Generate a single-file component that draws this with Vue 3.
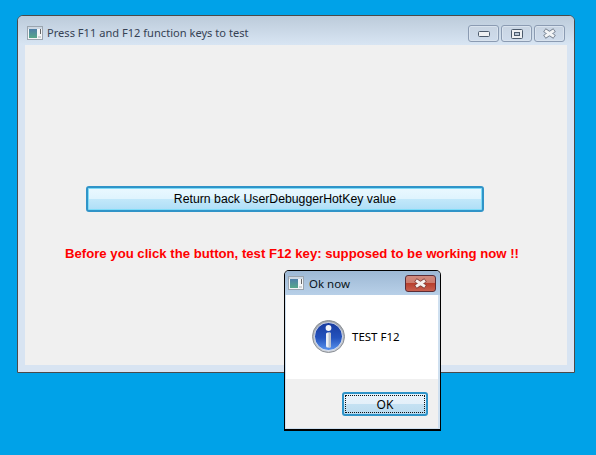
<template>
  <div class="desktop">
    <section class="window main">
      <header class="titlebar">
        <svg class="appicon" width="16" height="14" viewBox="0 0 16 14">
          <defs>
            <linearGradient id="scr" x1="0" y1="0" x2="0" y2="1">
              <stop offset="0" stop-color="#4f7fa8" />
              <stop offset="1" stop-color="#57a88a" />
            </linearGradient>
          </defs>
          <rect x="0.5" y="0.5" width="15" height="13" fill="#f4f6f8" stroke="#9aa4ae" />
          <rect x="1" y="1" width="14" height="2" fill="#cdd8e3" />
          <rect x="2" y="3" width="8" height="9" fill="url(#scr)" />
          <rect x="11" y="10" width="3" height="2" fill="#cfd3d7" />
          <rect x="13" y="3" width="1" height="5" fill="#666" />
        </svg>
        <span class="title-text">Press F11 and F12 function keys to test</span>
        <div class="controls">
          <button class="ctl">
            <svg width="12" height="6" viewBox="0 0 12 6"><rect x="0.5" y="0.5" width="11" height="5" rx="1" fill="#eef0f3" stroke="#4c5a6c" /></svg>
          </button>
          <button class="ctl">
            <svg width="12" height="10" viewBox="0 0 12 10"><rect x="0.5" y="0.5" width="11" height="9" rx="1" fill="#eef0f3" stroke="#4c5a6c" /><rect x="3.5" y="3.5" width="5" height="3" fill="#b9c6d6" stroke="#4c5a6c" /></svg>
          </button>
          <button class="ctl">
            <svg width="15" height="11" viewBox="0 0 15 11"><path d="M2.5 2 L12.5 9 M12.5 2 L2.5 9" fill="none" stroke="#6a7686" stroke-width="4.4" /><path d="M3 2.5 L12 8.5 M12 2.5 L3 8.5" fill="none" stroke="#f2f4f6" stroke-width="2.8" /></svg>
          </button>
        </div>
      </header>
      <div class="client">
        <button class="action">Return back UserDebuggerHotKey value</button>
        <p class="warning">Before you click the button, test F12 key: supposed to be working now !!</p>
      </div>
    </section>

    <section class="window dialog">
      <header class="dlg-title">
        <svg class="appicon" width="16" height="14" viewBox="0 0 16 14">
          <rect x="0.5" y="0.5" width="15" height="13" fill="#f4f6f8" stroke="#9aa4ae" />
          <rect x="1" y="1" width="14" height="2" fill="#cdd8e3" />
          <rect x="2" y="3" width="8" height="9" fill="url(#scr)" />
          <rect x="11" y="10" width="3" height="2" fill="#cfd3d7" />
          <rect x="13" y="3" width="1" height="5" fill="#666" />
        </svg>
        <span class="dlg-text">Ok now</span>
        <button class="dlg-close">
          <svg width="15" height="11" viewBox="0 0 15 11"><path d="M2.5 2 L12.5 9 M12.5 2 L2.5 9" fill="none" stroke="#7a3a34" stroke-width="4.4" /><path d="M3 2.5 L12 8.5 M12 2.5 L3 8.5" fill="none" stroke="#f6f1ef" stroke-width="2.8" /></svg>
        </button>
      </header>
      <div class="dlg-body">
        <svg width="33" height="33" viewBox="0 0 33 33">
          <defs>
            <linearGradient id="blue" x1="0" y1="0" x2="0" y2="1">
              <stop offset="0" stop-color="#183a9e" />
              <stop offset="0.55" stop-color="#2453bd" />
              <stop offset="1" stop-color="#5a94ee" />
            </linearGradient>
            <linearGradient id="ring" x1="0" y1="0" x2="0" y2="1">
              <stop offset="0" stop-color="#9da2a8" />
              <stop offset="1" stop-color="#d0d3d8" />
            </linearGradient>
          </defs>
          <circle cx="16.5" cy="16.5" r="16" fill="url(#ring)" stroke="#8a8f96" stroke-width="1" />
          <circle cx="16.5" cy="16.5" r="14" fill="url(#blue)" stroke="#f2f3f5" stroke-width="0.8" />
          <circle cx="16.5" cy="8" r="2.9" fill="#f4f6fa" />
          <rect x="14" y="12.5" width="5" height="15" rx="1.5" fill="#eef0f4" />
          <rect x="16.5" y="12.5" width="2.5" height="15" rx="1" fill="#bcc3ce" />
        </svg>
        <span class="dlg-msg">TEST F12</span>
      </div>
      <div class="dlg-foot">
        <button class="ok"><span class="ok-inner">OK</span></button>
      </div>
    </section>
  </div>
</template>

<script setup>
</script>

<style>
html, body { margin: 0; padding: 0; background: #00a2e8; }
</style>

<style scoped>
.desktop {
  position: relative;
  width: 596px;
  height: 455px;
  background: #00a2e8;
  overflow: hidden;
}
.window { position: absolute; box-sizing: border-box; }
.main {
  left: 17px;
  top: 15px;
  width: 558px;
  height: 358px;
  border: 1px solid #4a4a4a;
  border-radius: 6px 6px 0 0;
  background: #d8e4f2;
  display: flex;
  flex-direction: column;
  padding: 0 7px 7px;
}
.titlebar {
  display: flex;
  align-items: flex-start;
  height: 29px;
  flex: none;
  margin: 0 -7px;
  padding: 0 9px 0 9px;
  border-radius: 5px 5px 0 0;
  background: linear-gradient(#bccbda, #d8e5f3);
}
.appicon { flex: none; margin-top: 10px; }
.title-text {
  font: 11.1px/34px "Noto Sans", sans-serif;
  color: #364254;
  margin-left: 4px;
  white-space: nowrap;
}
.controls { display: flex; gap: 2px; margin-left: auto; margin-top: 9px; }
.ctl {
  width: 31px;
  height: 17px;
  box-sizing: border-box;
  padding: 0;
  border: 1px solid #8b9bb2;
  border-radius: 3px;
  background: linear-gradient(#c8d4e2, #cfdcec);
  box-shadow: inset 0 0 0 1px #d9e3ee;
  display: flex;
  align-items: center;
  justify-content: center;
}
.client {
  flex: 1;
  background: #f0f0f0;
  display: flex;
  flex-direction: column;
  align-items: flex-start;
  padding: 141px 0 0 0;
}
.action {
  margin-left: 61px;
  width: 398px;
  height: 26px;
  box-sizing: border-box;
  padding: 0;
  border: 2px solid #3094c8;
  border-radius: 3px;
  background: linear-gradient(#eaf8ff 0%, #dff4fe 48%, #c2e8fa 50%, #aedef7 100%);
  box-shadow: inset 0 0 0 1px #7fdcf8;
  font: 12.27px "Liberation Sans", sans-serif;
  color: #000;
}
.warning {
  margin: 34px 0 0 40px;
  font: bold 13.17px/16px "Liberation Sans", sans-serif;
  color: #ff0000;
  white-space: nowrap;
}
.dialog {
  left: 284px;
  top: 270px;
  width: 157px;
  height: 161px;
  border: 1px solid #000;
  border-bottom-width: 2px;
  border-radius: 5px 5px 0 0;
  background: #cfe0f0;
  display: flex;
  flex-direction: column;
  padding: 0 2px 1px 1px;
}
.dlg-title {
  flex: none;
  height: 24px;
  margin: 0 -2px 0 -1px;
  padding: 0 4px 0 3px;
  display: flex;
  align-items: flex-start;
  border-radius: 4px 4px 0 0;
  background: linear-gradient(#9db8d4, #b8d0e8);
}
.dlg-title .appicon { margin-top: 5px; }
.dlg-text {
  font: 11.5px/26px "Noto Sans", sans-serif;
  color: #0a1420;
  margin-left: 5px;
}
.dlg-close {
  margin-left: auto;
  margin-top: 4px;
  width: 31px;
  height: 17px;
  box-sizing: border-box;
  padding: 0;
  border: 1px solid #5b2d36;
  border-radius: 3px;
  background: linear-gradient(#d08a7e 0%, #cc7c6e 45%, #b8402e 50%, #c86050 100%);
  display: flex;
  align-items: center;
  justify-content: center;
}
.dlg-body {
  flex: none;
  height: 84px;
  background: #fff;
  display: flex;
  align-items: center;
  padding: 0 0 1px 26px;
  box-sizing: border-box;
}
.dlg-msg {
  font: 11.5px "Noto Sans", sans-serif;
  color: #000;
  margin-left: 7px;
}
.dlg-foot {
  flex: 1;
  background: #f0f0f0;
  display: flex;
  justify-content: flex-end;
  align-items: flex-start;
  padding: 13px 10px 0 0;
}
.ok {
  width: 86px;
  height: 24px;
  box-sizing: border-box;
  padding: 1px;
  border: 2px solid #3094c8;
  border-radius: 3px;
  background: linear-gradient(#e8f3fb 0%, #e4f0f9 48%, #c4e1f2 52%, #bcdcef 100%);
  display: flex;
}
.ok-inner {
  flex: 1;
  border: 1px dotted #111;
  display: flex;
  align-items: center;
  justify-content: center;
  font: 12px "Noto Sans", sans-serif;
  color: #000;
}
</style>
